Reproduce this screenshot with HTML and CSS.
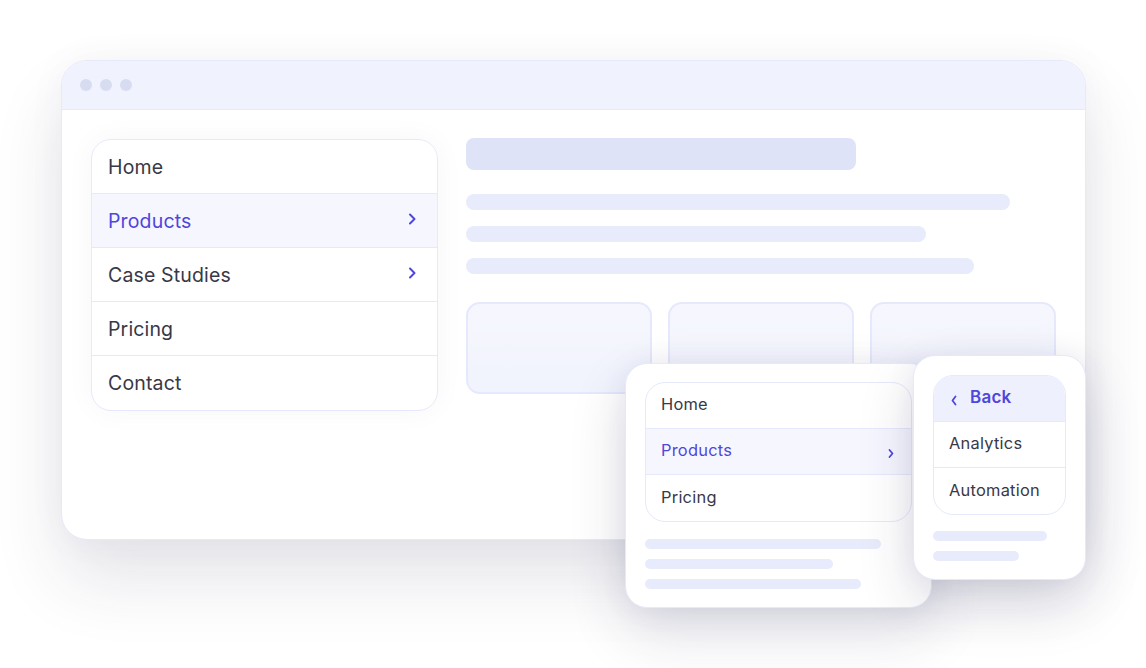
FILE: index.html
```html
<!DOCTYPE html>
<html lang="en">
<head>
    <meta charset="UTF-8">
    <meta name="viewport" content="width=device-width, initial-scale=1.0">
    <title>Responsive Navigation</title>
    <link rel="stylesheet" href="styles.css">
</head>
<body>
    <div class="scene">
        <!-- Desktop window -->
        <div class="window">
            <div class="titlebar">
                <span class="dot"></span>
                <span class="dot"></span>
                <span class="dot"></span>
            </div>
            <div class="window-body">
                <ul class="menu menu-lg">
                    <li class="menu-item">Home</li>
                    <li class="menu-item active">Products
                        <svg class="chev" width="10" height="14" viewBox="0 0 10 14"><path d="M3 2.5 L7.5 7 L3 11.5"/></svg>
                    </li>
                    <li class="menu-item">Case Studies
                        <svg class="chev" width="10" height="14" viewBox="0 0 10 14"><path d="M3 2.5 L7.5 7 L3 11.5"/></svg>
                    </li>
                    <li class="menu-item">Pricing</li>
                    <li class="menu-item">Contact</li>
                </ul>

                <div class="content">
                    <div class="bar-title"></div>
                    <div class="lines">
                        <div class="line" style="width: 544px"></div>
                        <div class="line" style="width: 460px"></div>
                        <div class="line" style="width: 508px"></div>
                    </div>
                    <div class="cards">
                        <div class="card"></div>
                        <div class="card"></div>
                        <div class="card"></div>
                    </div>
                </div>
            </div>
        </div>

        <!-- Tablet -->
        <div class="device tablet">
            <ul class="menu menu-md">
                <li class="menu-item">Home</li>
                <li class="menu-item active">Products
                    <svg class="chev chev-sm" width="8" height="12" viewBox="0 0 8 12"><path d="M2.5 3 L5.5 6.5 L2.5 10"/></svg>
                </li>
                <li class="menu-item">Pricing</li>
            </ul>
            <div class="lines lines-sm">
                <div class="line" style="width: 236px"></div>
                <div class="line" style="width: 188px"></div>
                <div class="line" style="width: 216px"></div>
            </div>
        </div>

        <!-- Phone -->
        <div class="device phone">
            <ul class="menu menu-md">
                <li class="menu-item back">
                    <svg class="chev chev-sm" width="8" height="12" viewBox="0 0 8 12"><path d="M5.5 2.5 L2.5 6.5 L5.5 10.5"/></svg>
                    Back
                </li>
                <li class="menu-item">Analytics</li>
                <li class="menu-item">Automation</li>
            </ul>
            <div class="lines lines-sm">
                <div class="line" style="width: 114px"></div>
                <div class="line" style="width: 86px"></div>
            </div>
        </div>
    </div>
</body>
</html>
```

FILE: styles.css
```css
:root {
    --text: #383846;
    --accent: #4f46dc;
    --border: #e6e9fb;
    --bar: #dfe3f8;
    --line: #e8ebfb;
    --tint: #f5f6fe;
    --tint-strong: #eef1fd;
    --titlebar: #f0f3fd;
    --dot: #d8dcf0;
}

* {
    margin: 0;
    padding: 0;
    box-sizing: border-box;
}

body {
    font-family: 'Inter', 'Noto Sans', sans-serif;
    background: #ffffff;
    color: var(--text);
    overflow: hidden;
}

.scene {
    position: relative;
    width: 1146px;
    height: 668px;
    padding: 60px 0 0 61px;
}

/* Desktop browser frame */
.window {
    width: 1025px;
    height: 480px;
    background: #ffffff;
    border: 1px solid var(--border);
    border-radius: 26px;
    overflow: hidden;
    box-shadow: 0 40px 70px rgba(40, 40, 80, 0.12), 0 0 40px rgba(40, 40, 90, 0.04);
}

.titlebar {
    height: 49px;
    background: var(--titlebar);
    border-bottom: 1px solid var(--border);
    display: flex;
    align-items: center;
    gap: 8px;
    padding: 0 0 1px 18px;
}

.dot {
    width: 12px;
    height: 12px;
    border-radius: 50%;
    background: var(--dot);
}

.window-body {
    display: flex;
    gap: 28px;
    padding: 28px 29px;
}

/* Navigation menus */
.menu {
    list-style: none;
    background: #ffffff;
    border: 1px solid var(--border);
    border-radius: 20px;
    overflow: hidden;
}

.menu-item {
    display: flex;
    align-items: center;
    justify-content: space-between;
    border-bottom: 1px solid var(--border);
}

.menu-item:last-child {
    border-bottom: none;
}

.menu-item.active {
    background: var(--tint);
    color: var(--accent);
}

.menu-lg {
    width: 347px;
    margin-top: 1px;
    box-shadow: 0 0 30px rgba(40, 40, 90, 0.04);
}

.menu-lg .menu-item {
    height: 54px;
    padding: 0 20px 0 16px;
    font-size: 19.5px;
    letter-spacing: 0.15px;
}

.menu-md .menu-item {
    height: 46px;
    padding: 0 16px 3px 15px;
    font-size: 16.4px;
    letter-spacing: 0.25px;
}

.chev {
    fill: none;
    stroke: var(--accent);
    stroke-width: 2;
    stroke-linecap: round;
    stroke-linejoin: round;
    margin-bottom: 4px;
}

.chev-sm {
    stroke-width: 1.8;
    margin-bottom: 0;
}

.menu-md .menu-item.active .chev {
    margin-top: 6px;
}

.menu-item.back {
    background: var(--tint-strong);
    color: var(--accent);
    font-weight: 600;
    justify-content: flex-start;
    gap: 12px;
    padding-left: 16px;
    font-size: 17px;
}

.menu-item.back .chev {
    margin-top: 6px;
}

/* Placeholder page content */
.content {
    flex: 1;
}

.bar-title {
    width: 390px;
    height: 32px;
    background: var(--bar);
    border-radius: 8px;
}

.lines {
    display: flex;
    flex-direction: column;
    gap: 16px;
    margin-top: 24px;
}

.line {
    height: 16px;
    background: var(--line);
    border-radius: 8px;
}

.cards {
    display: flex;
    gap: 16px;
    margin-top: 28px;
}

.card {
    width: 186px;
    height: 92px;
    border: 2px solid var(--border);
    border-radius: 14px;
    background: linear-gradient(180deg, #f6f7fe, #f1f3fd);
}

/* Floating device frames */
.device {
    position: absolute;
    background: #ffffff;
    border: 1px solid var(--border);
    border-radius: 22px;
    padding: 19px 19px 0;
    box-shadow: 0 24px 56px rgba(40, 40, 90, 0.16), 0 0 30px rgba(40, 40, 90, 0.06);
}

.tablet {
    left: 625px;
    top: 363px;
    width: 307px;
    height: 245px;
    padding-top: 18px;
}

.phone {
    left: 913px;
    top: 355px;
    width: 173px;
    height: 225px;
}

.lines-sm {
    gap: 10px;
    margin-top: 16px;
}

.tablet .lines-sm {
    margin-top: 17px;
}

.lines-sm .line {
    height: 10px;
    border-radius: 5px;
}
```
